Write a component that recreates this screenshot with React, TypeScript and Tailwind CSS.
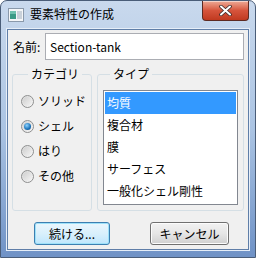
import React from "react";

const font = { fontFamily: "'Noto Sans CJK JP', 'Noto Sans', sans-serif" };

const categories = ["ソリッド", "シェル", "はり", "その他"];
const types = ["均質", "複合材", "膜", "サーフェス", "一般化シェル剛性"];

function Radio({ checked }: { checked?: boolean }) {
  return (
    <span className="relative flex h-[13px] w-[13px] items-center justify-center rounded-full border border-[#8e8f8f] bg-gradient-to-br from-[#d8d8d8] to-[#f8f8f8]">
      <span className="h-[9px] w-[9px] rounded-full bg-gradient-to-br from-[#cfcfcf] to-[#f4f4f4]">
        {checked && (
          <span className="m-[1px] block h-[7px] w-[7px] rounded-full bg-[radial-gradient(circle_at_40%_35%,#8fd3ff,#1a72b8_60%,#0d3f75)]" />
        )}
      </span>
    </span>
  );
}

function WinIcon() {
  return (
    <svg width="16" height="14" viewBox="0 0 16 14">
      <rect x="0.5" y="0.5" width="15" height="13" fill="#f4f6f8" stroke="#8a99ab" />
      <rect x="2" y="3" width="6" height="8" fill="#3a9a86" />
      <rect x="2" y="3" width="6" height="3" fill="#6fc0ae" />
      <rect x="9" y="3" width="5" height="8" fill="#c9d1da" />
    </svg>
  );
}

export default function App() {
  return (
    <div
      className="flex h-[258px] w-[256px] flex-col overflow-hidden rounded-t-[7px] border border-[#4a5d78] bg-gradient-to-b from-[#c9d9ed] via-[#abc4e3] to-[#6f92c6] text-[12px] text-black"
      style={font}
    >
      {/* Title bar */}
      <div className="flex h-[28px] shrink-0 items-start">
        <div className="mt-[7px] ml-[7px]">
          <WinIcon />
        </div>
        <span className="mt-[4px] ml-[6px] text-[12px] leading-[18px] text-black">要素特性の作成</span>
        <button className="mr-[6px] ml-auto flex h-[20px] w-[47px] items-center justify-center rounded-b-[4px] border border-t-0 border-[#5d2a22] bg-gradient-to-b from-[#eca996] via-[#d6543c] to-[#c0391f] shadow-[inset_0_1px_0_rgba(255,255,255,0.5)]">
          <svg width="13" height="11" viewBox="0 0 13 11">
            <path d="M2 1.5 L11 9.5 M11 1.5 L2 9.5" stroke="#3b2a2a" strokeWidth="3.6" strokeLinecap="round" />
            <path d="M2 1.5 L11 9.5 M11 1.5 L2 9.5" stroke="#ffffff" strokeWidth="2" strokeLinecap="round" />
          </svg>
        </button>
      </div>

      {/* Client area */}
      <div className="mx-[6px] mb-[7px] flex flex-1 flex-col border border-[#5f7ea8] bg-[#f0f0f0] px-[4px] pt-[3px] shadow-[0_0_0_1px_#e6eef8]">
        <div className="flex h-[27px] items-center">
          <span className="w-[33px] pl-[1px] text-[12px]">名前:</span>
          <div className="flex h-[27px] flex-1 items-center border border-[#abadb3] bg-white px-[4px] text-[12px]">
            Section-tank
          </div>
        </div>

        <div className="mt-[5px] flex h-[146px] gap-[5px]">
          <fieldset className="w-[80px] rounded-[3px] border border-[#d5dfe5] pl-[8px]">
            <legend className="ml-[7px] px-[3px] text-[12px] leading-[18px]">カテゴリ</legend>
            <div className="mt-[9px] flex flex-col gap-[7px]">
              {categories.map((c, i) => (
                <label key={c} className="flex h-[18px] items-center gap-[4px] text-[12px]">
                  <Radio checked={i === 1} />
                  <span>{c}</span>
                </label>
              ))}
            </div>
          </fieldset>

          <fieldset className="flex-1 rounded-[3px] border border-[#d5dfe5] px-[5px] pb-[4px]">
            <legend className="ml-[7px] px-[3px] text-[12px] leading-[18px]">タイプ</legend>
            <div className="mt-[7px] h-[115px] border border-[#828790] bg-white p-[1px]">
              {types.map((t, i) => (
                <div
                  key={t}
                  className={
                    i === 0
                      ? "flex h-[22px] items-center bg-[#3399ff] px-[2px] text-white"
                      : "flex h-[22px] items-center px-[2px]"
                  }
                >
                  {t}
                </div>
              ))}
            </div>
          </fieldset>
        </div>

        <div className="mt-[11px] flex">
          <button className="ml-[22px] h-[23px] w-[76px] rounded-[3px] border border-[#3c7fb1] bg-gradient-to-b from-[#eaf6fd] via-[#d9f0fc] to-[#bee6fd] text-[12px] shadow-[inset_0_0_0_1px_#9ee1f9]">
            続ける...
          </button>
          <button className="ml-[40px] h-[23px] w-[79px] rounded-[3px] border border-[#707070] bg-gradient-to-b from-[#f2f2f2] via-[#e6e6e6] to-[#d0d0d0] text-[12px] shadow-[inset_0_0_0_1px_#fcfcfc]">
            キャンセル
          </button>
        </div>
      </div>
    </div>
  );
}
